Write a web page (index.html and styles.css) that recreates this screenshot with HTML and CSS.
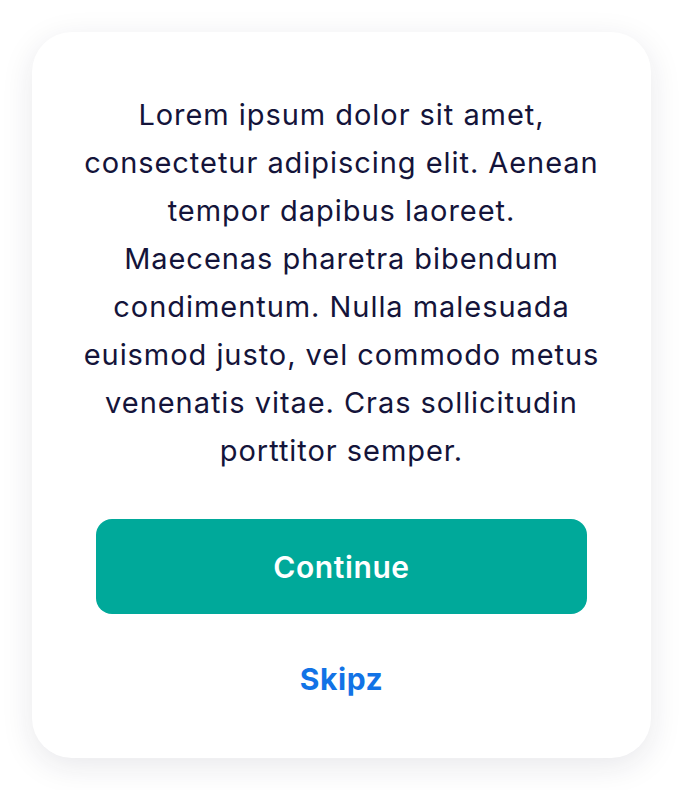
FILE: index.html
```html
<!DOCTYPE html>
<html>
<head>
<meta charset="utf-8">
<link rel="stylesheet" href="styles.css">
</head>
<body>
<div class="card">
  <p class="msg">Lorem ipsum dolor sit amet,<br>consectetur adipiscing elit. Aenean<br>tempor dapibus laoreet.<br>Maecenas pharetra bibendum<br>condimentum. Nulla malesuada<br>euismod justo, vel commodo metus<br>venenatis vitae. Cras sollicitudin<br>porttitor semper.</p>
  <button class="btn">Continue</button>
  <a class="skip">Skipz</a>
</div>
</body>
</html>
```
FILE: styles.css
```css
html, body { margin: 0; padding: 0; background: #fff; }
body { padding: 32px; font-family: Inter, "Noto Sans", sans-serif; }
.card {
  width: 619px;
  height: 726px;
  box-sizing: border-box;
  background: #fff;
  border-radius: 40px;
  box-shadow: 0 8px 32px rgba(30, 30, 60, 0.10);
  padding: 59px 20px 0;
  display: flex;
  flex-direction: column;
  align-items: center;
}
.msg {
  margin: 0;
  text-align: center;
  font-size: 29px;
  line-height: 48px;
  letter-spacing: 0.95px;
  color: #14143a;
  white-space: nowrap;
}
.btn {
  margin-top: 44px;
  width: 491px;
  height: 95px;
  border: none;
  border-radius: 16px;
  background: #00a99a;
  color: #fff;
  font-family: inherit;
  font-size: 30px;
  font-weight: 600;
  letter-spacing: 0.6px;
}
.skip {
  margin-top: 47px;
  font-size: 30px;
  font-weight: 700;
  color: #1273e6;
  line-height: 36px;
  letter-spacing: 0.6px;
}
```
